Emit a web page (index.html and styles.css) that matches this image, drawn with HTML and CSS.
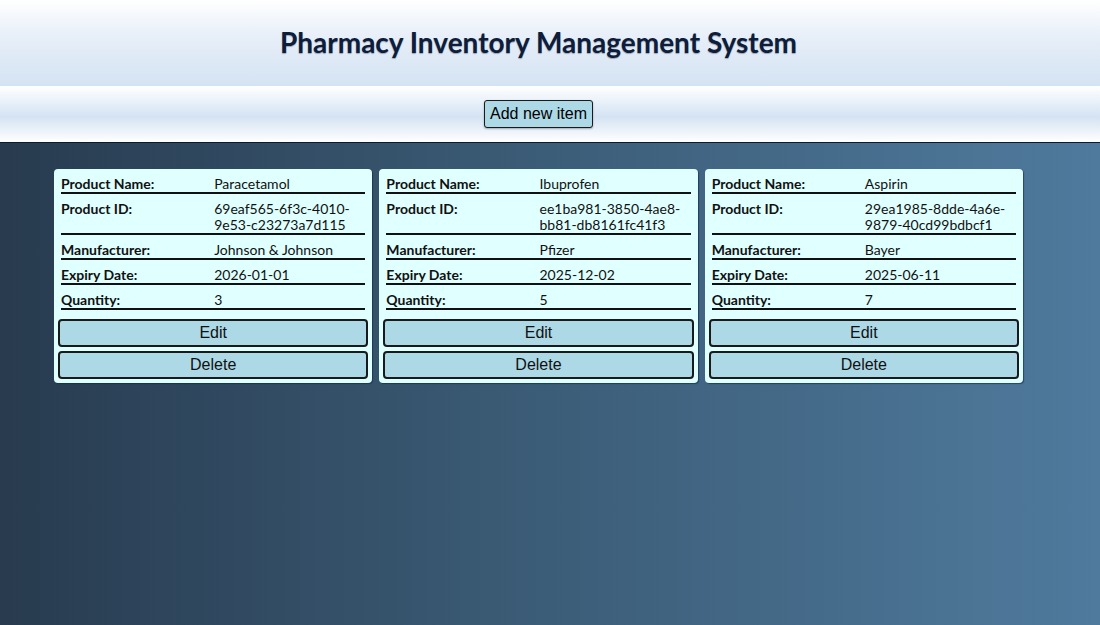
FILE: index.html
```html
<!DOCTYPE html>
<html>
<head>
<meta charset="utf-8">
<link rel="stylesheet" href="styles.css">
</head>
<body>
<header class="top">
  <h1 class="title">Pharmacy Inventory Management System</h1>
</header>
<div class="toolbar">
  <button class="add-btn">Add new item</button>
</div>
<main class="main">
  <div class="cards">
    <div class="card">
      <div class="rows">
        <div class="row"><span class="label">Product Name:</span><span class="value">Paracetamol</span></div>
        <div class="row"><span class="label">Product ID:</span><span class="value">69eaf565-6f3c-4010-9e53-c23273a7d115</span></div>
        <div class="row"><span class="label">Manufacturer:</span><span class="value">Johnson &amp; Johnson</span></div>
        <div class="row"><span class="label">Expiry Date:</span><span class="value">2026-01-01</span></div>
        <div class="row"><span class="label">Quantity:</span><span class="value">3</span></div>
      </div>
      <button class="card-btn">Edit</button>
      <button class="card-btn">Delete</button>
    </div>
    <div class="card">
      <div class="rows">
        <div class="row"><span class="label">Product Name:</span><span class="value">Ibuprofen</span></div>
        <div class="row"><span class="label">Product ID:</span><span class="value">ee1ba981-3850-4ae8-bb81-db8161fc41f3</span></div>
        <div class="row"><span class="label">Manufacturer:</span><span class="value">Pfizer</span></div>
        <div class="row"><span class="label">Expiry Date:</span><span class="value">2025-12-02</span></div>
        <div class="row"><span class="label">Quantity:</span><span class="value">5</span></div>
      </div>
      <button class="card-btn">Edit</button>
      <button class="card-btn">Delete</button>
    </div>
    <div class="card">
      <div class="rows">
        <div class="row"><span class="label">Product Name:</span><span class="value">Aspirin</span></div>
        <div class="row"><span class="label">Product ID:</span><span class="value">29ea1985-8dde-4a6e-9879-40cd99bdbcf1</span></div>
        <div class="row"><span class="label">Manufacturer:</span><span class="value">Bayer</span></div>
        <div class="row"><span class="label">Expiry Date:</span><span class="value">2025-06-11</span></div>
        <div class="row"><span class="label">Quantity:</span><span class="value">7</span></div>
      </div>
      <button class="card-btn">Edit</button>
      <button class="card-btn">Delete</button>
    </div>
  </div>
</main>
</body>
</html>
```
FILE: styles.css
```css
html, body {
  margin: 0;
  padding: 0;
  height: 100%;
}
body {
  font-family: Lato, "Liberation Sans", sans-serif;
  background: linear-gradient(90deg, #283b4f 0%, #3c5d78 50%, #4f7a9d 100%);
  display: flex;
  flex-direction: column;
}
.top {
  height: 86px;
  background: linear-gradient(180deg, #ffffff 0%, #e6eef8 45%, #d4e3f3 100%);
  display: flex;
  align-items: center;
  justify-content: center;
  padding-right: 23px;
}
.title {
  margin: 0 0 2px;
  font-family: Lato, sans-serif;
  font-weight: 700;
  font-size: 28px;
  color: #0d1d3b;
  text-shadow: 0 1px 1px rgba(0, 0, 0, 0.3);
}
.toolbar {
  height: 56px;
  background: linear-gradient(180deg, #ffffff 0%, #d4e3f3 55%, #ffffff 100%);
  border-bottom: 1px solid #0c1a2e;
  display: flex;
  align-items: center;
  justify-content: center;
  padding-right: 23px;
}
.add-btn {
  font-family: "Liberation Sans", Arial, sans-serif;
  font-size: 16px;
  color: #000;
  background: #add8e6;
  border: 1.5px solid #1a1a1a;
  border-radius: 3px;
  height: 28px;
  padding: 0 5px;
  box-shadow: 0 1px 2px rgba(0, 0, 0, 0.3);
}
.main {
  flex: 1;
  padding: 26px 23px 0 0;
}
.cards {
  display: flex;
  justify-content: center;
  gap: 7px;
  align-items: flex-start;
}
.card {
  width: 310.33px;
  background: #e0ffff;
  border-radius: 4px;
  padding: 4px;
  display: flex;
  flex-direction: column;
  gap: 4px;
  box-shadow: 1px 1px 1px rgba(10, 40, 80, 0.6);
}
.rows {
  padding: 0 3px 5px;
}
.row {
  display: grid;
  grid-template-columns: 1fr 1fr;
  padding-top: 7px;
  border-bottom: 2px solid #111;
  font-size: 14px;
  line-height: 16px;
  color: #111;
}
.row:first-child {
  padding-top: 3px;
}
.label {
  font-weight: 700;
}
.value {
  font-weight: 400;
  padding-left: 1px;
}
.card-btn {
  font-family: "Liberation Sans", Arial, sans-serif;
  font-size: 16px;
  color: #111;
  background: #add8e6;
  border: 2px solid #1a1a1a;
  border-radius: 4px;
  height: 28px;
  padding: 0;
  width: 100%;
}
```
